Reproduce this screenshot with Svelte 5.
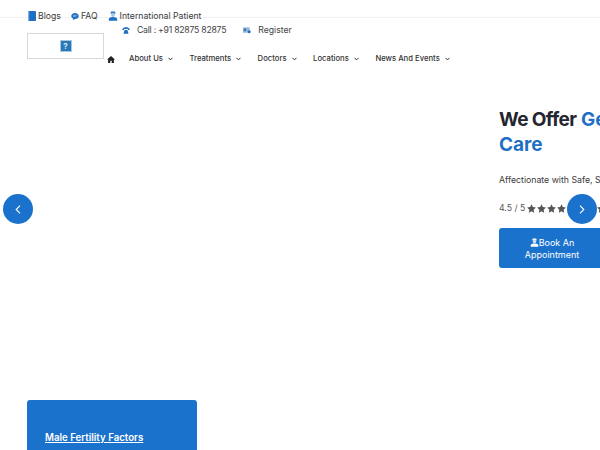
<script>
	const topLinks = [
		{ label: 'Blogs', icon: 'book' },
		{ label: 'FAQ', icon: 'chat' },
		{ label: 'International Patient', icon: 'doctor' }
	];
	const navItems = ['About Us', 'Treatments', 'Doctors', 'Locations', 'News And Events'];
</script>

{#snippet doctor(size, cap, face, body)}
	<svg width={size} height={size} viewBox="0 0 12 12" aria-hidden="true">
		<path d="M3 3.200h6l-.6-2.700H3.600z" fill={cap} />
		<circle cx="6" cy="4.800" r="2.300" fill={face} />
		<path d="M1 11.800V9.700c0-1.600 2.200-2.400 5-2.400s5 .8 5 2.400v2.100z" fill={body} />
	</svg>
{/snippet}

<div class="page">
	<div class="topbar">
		{#each topLinks as link}
			<a class="top-link" href="#top">
				{#if link.icon === 'book'}
					<svg width="8" height="10" viewBox="0 0 8 10" aria-hidden="true">
						<rect width="8" height="10" rx="0.800" fill="#1f6fc4" />
						<rect width="1.200" height="10" fill="#7fb0e0" />
					</svg>
				{:else if link.icon === 'chat'}
					<svg width="8" height="9" viewBox="0 0 10 10" aria-hidden="true">
						<path d="M5 .5c2.700 0 4.700 1.700 4.700 3.900S7.700 8.200 5 8.200L2.600 9.700l.3-2C1.300 7 .3 5.800.3 4.400.3 2.200 2.300.5 5 .5z" fill="#1f6fc4" />
						<path d="M2.600 3.600h4.800M2.600 5h3.400" stroke="#bcd7f0" stroke-width="0.700" />
					</svg>
				{:else}
					{@render doctor(10, '#2f78c2', '#a9c8e6', '#1f6fc4')}
				{/if}
				<span>{link.label}</span>
			</a>
		{/each}
	</div>

	<header class="mainbar">
		<div class="logo">
			<span class="missing">?</span>
		</div>
		<div class="mainbar-right">
			<div class="contact">
				<span class="contact-item phone">
					<svg width="8" height="7" viewBox="0 0 8 7" aria-hidden="true">
						<path d="M0 2.500C1 .8 2.400.3 4 .3s3 .5 4 2.200L6.300 3.200 5.700 2H2.300l-.6 1.200z" fill="#1f6fc4" />
						<path d="M1.500 6.700 2.500 2.900h3l1 3.800z" fill="#1f6fc4" />
					</svg>
					<span>Call : +91 82875 82875</span>
				</span>
				<span class="contact-item">
					<svg width="8" height="7" viewBox="0 0 9 7" aria-hidden="true">
						<rect width="7.500" height="6" fill="#8fb6dc" />
						<rect x="1" y="1.500" width="2.400" height="2.400" fill="#2c6fb5" />
						<circle cx="7" cy="5" r="1.700" fill="#2c6fb5" />
					</svg>
					<span>Register</span>
				</span>
			</div>
			<nav class="nav">
				<svg class="home" width="8" height="7" viewBox="0 0 8 7" aria-hidden="true">
					<path d="M4 0 0 3.500h1.100V7h2.200V4.700h1.400V7h2.200V3.500H8z" fill="#222" />
				</svg>
				{#each navItems as item}
					<a class="nav-item" href="#top">
						<span>{item}</span>
						<svg width="5" height="4" viewBox="0 0 5 4" aria-hidden="true">
							<path d="M.5 .8 2.500 2.900 4.500 .8" fill="none" stroke="#333" stroke-width="1" />
						</svg>
					</a>
				{/each}
			</nav>
		</div>
	</header>

	<section class="hero">
		<button class="arrow prev" aria-label="Previous">
			<svg width="6" height="9" viewBox="0 0 6 9" aria-hidden="true">
				<path d="M5 .7 1.200 4.500 5 8.300" fill="none" stroke="#fff" stroke-width="1.100" />
			</svg>
		</button>
		<button class="arrow next" aria-label="Next">
			<svg width="6" height="9" viewBox="0 0 6 9" aria-hidden="true">
				<path d="M1 .7 4.800 4.500 1 8.300" fill="none" stroke="#fff" stroke-width="1.100" />
			</svg>
		</button>

		<div class="hero-copy">
			<h1><span class="dark">We Offer</span> <em>Gentle</em><br /><em>Care</em></h1>
			<p class="lead">Affectionate with Safe, Scientific Treatment</p>
			<div class="rating">
				<span>4.5 / 5</span>
				<span class="stars">
					{#each Array(8) as _, i (i)}
						<svg width="9" height="9" viewBox="0 0 10 10" aria-hidden="true">
							<path d="M5 .3l1.500 3.100 3.400.5-2.500 2.400.6 3.400L5 8.100 2 9.700l.6-3.400L.1 3.900l3.400-.5z" fill="#555" />
						</svg>
					{/each}
				</span>
			</div>
			<a class="book" href="#top">
				<span class="book-line">{@render doctor(9, '#fff', '#cfe2f5', '#fff')}Book An</span>
				<span>Appointment</span>
			</a>
		</div>
	</section>

	<div class="card">
		<a href="#top">Male Fertility Factors</a>
	</div>
</div>

<style>
	:global(body) {
		background: #fff;
	}

	.page {
		position: relative;
		width: 600px;
		height: 450px;
		overflow: hidden;
		font-family: Inter, "Open Sans", sans-serif;
		color: #333;
	}

	a {
		color: inherit;
		text-decoration: none;
	}

	.topbar {
		display: flex;
		gap: 10px;
		height: 18px;
		padding: 10px 0 0 28px;
		box-sizing: border-box;
		border-bottom: 1px solid #f1f1f1;
		font-size: 8.700px;
		line-height: 12px;
		color: #3c3c3c;
	}

	.top-link {
		display: flex;
		align-items: center;
		gap: 2px;
		height: 12px;
	}

	.mainbar {
		display: flex;
		padding-left: 27px;
	}

	.logo {
		display: flex;
		align-items: center;
		justify-content: center;
		width: 77px;
		height: 26px;
		margin-top: 15px;
		box-sizing: border-box;
		border: 1px solid #d8d8d8;
	}

	.missing {
		width: 10px;
		height: 10px;
		background: #2a78b8;
		box-shadow: 0 0 0 1px #a8c8e0;
		color: #dcecf8;
		font-size: 8px;
		font-weight: 700;
		line-height: 10px;
		text-align: center;
	}

	.mainbar-right {
		display: flex;
		flex-direction: column;
		margin-left: 3px;
	}

	.contact {
		display: flex;
		gap: 17px;
		padding: 6px 0 0 15px;
		font-size: 8.700px;
		line-height: 13px;
		color: #444;
	}

	.contact-item {
		display: flex;
		align-items: center;
		gap: 7px;
	}

	.phone span {
		letter-spacing: -0.250px;
	}

	.nav {
		display: flex;
		align-items: center;
		gap: 16.500px;
		margin-top: 16px;
		font-size: 7.700px;
		font-weight: 500;
		line-height: 12px;
		color: #333;
	}

	.home {
		margin-right: -2.500px;
	}

	.nav-item {
		display: flex;
		align-items: center;
		gap: 5px;
		white-space: nowrap;
	}

	.hero {
		position: absolute;
		top: 0;
		left: 0;
		width: 600px;
		height: 400px;
	}

	.hero-copy {
		position: absolute;
		top: 107px;
		left: 499px;
		width: 260px;
	}

	h1 {
		margin: 0;
		font-size: 19px;
		font-weight: 700;
		line-height: 25px;
		color: #24252f;
	}

	.dark {
		letter-spacing: -0.600px;
	}

	em {
		font-style: normal;
		color: #1f6fc4;
	}

	.lead {
		margin: 16px 0 0;
		font-size: 8.750px;
		line-height: 14px;
		white-space: nowrap;
		color: #3c3c3c;
	}

	.rating {
		display: flex;
		align-items: center;
		gap: 2px;
		margin-top: 14px;
		font-size: 8.700px;
		line-height: 14px;
		color: #555;
		white-space: nowrap;
	}

	.stars {
		display: flex;
		gap: 1px;
	}

	.book {
		display: flex;
		flex-direction: column;
		align-items: center;
		justify-content: center;
		width: 106px;
		height: 40px;
		padding-top: 1px;
		box-sizing: border-box;
		margin-top: 13px;
		border-radius: 3px;
		background: #1b72cc;
		font-size: 9px;
		line-height: 12px;
		color: #fff;
	}

	.book-line {
		display: flex;
		align-items: center;
	}

	.arrow {
		position: absolute;
		top: 194px;
		display: flex;
		align-items: center;
		justify-content: center;
		width: 30px;
		height: 30px;
		padding: 0;
		border: none;
		border-radius: 50%;
		background: #1b72cc;
		z-index: 2;
	}

	.prev {
		left: 2.500px;
	}

	.next {
		left: 567px;
	}

	.card {
		position: absolute;
		top: 400px;
		left: 27px;
		width: 170px;
		height: 120px;
		padding: 30px 18px;
		box-sizing: border-box;
		border-radius: 3px;
		background: #1b72cc;
		font-size: 9.700px;
		font-weight: 600;
		line-height: 15px;
		color: #fff;
	}

	.card a {
		text-decoration: underline;
	}
</style>
